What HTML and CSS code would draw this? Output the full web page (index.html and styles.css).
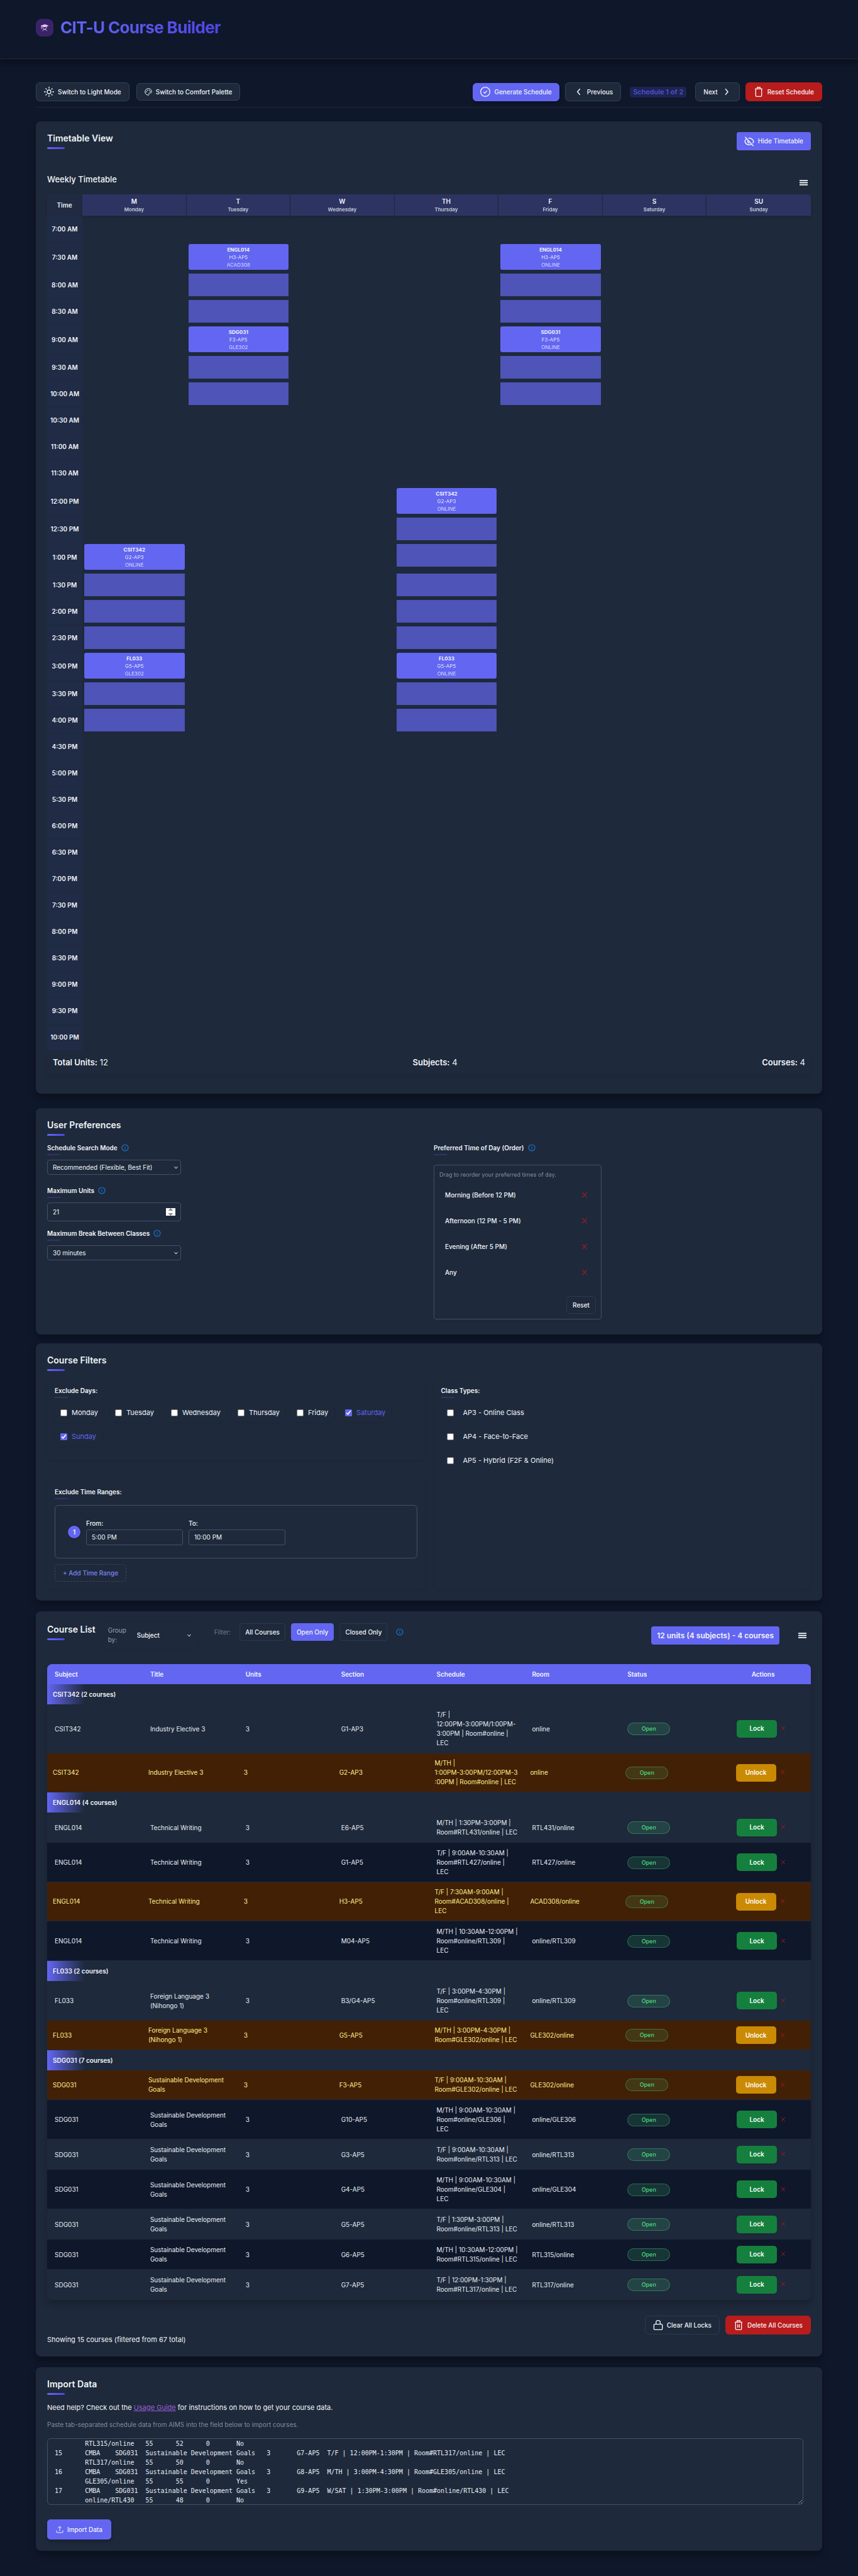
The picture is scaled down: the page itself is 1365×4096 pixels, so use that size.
FILE: index.html
```html
<!DOCTYPE html>
<html lang="en">
<head>
<meta charset="utf-8">
<meta name="viewport" content="width=device-width, initial-scale=1">
<title>CIT-U Course Builder</title>
<link rel="stylesheet" href="styles.css">
</head>
<body>
<svg class="sprite" aria-hidden="true">
  <symbol id="i-info" viewBox="0 0 24 24"><circle cx="12" cy="12" r="10" fill="none" stroke="currentColor" stroke-width="2.400"/><path d="M12 11v6M12 6.500v2.500" stroke="currentColor" stroke-width="2.400" fill="none"/></symbol>
  <symbol id="i-x" viewBox="0 0 12 12"><path d="M1.500 1l9 10M10.500 1l-9 10" stroke="currentColor" stroke-width="1.300" fill="none"/></symbol>
  <symbol id="i-menu" viewBox="0 0 18 12"><path d="M0 0h18v2.500H0zM0 4.750h18v2.500H0zM0 9.500h18v2.500H0z" fill="currentColor"/></symbol>
</svg>

<header class="site-header">
  <span class="logo"><svg viewBox="0 0 24 24" fill="none" stroke="currentColor" stroke-width="1.800" stroke-linecap="round"><path d="M12 2.500L1.500 6 12 9.500 22.500 6z" fill="currentColor" stroke-linejoin="round"/><path d="M2 6v9M6 8v3a6 6 0 0 0 12 0V8M5 22l4-4M19 22l-4-4M9 18q3-2 6 0"/></svg></span>
  <h1>CIT-U Course Builder</h1>
</header>

<main>
  <div class="toolbar">
    <div class="toolbar-left">
      <button class="btn" type="button"><svg viewBox="0 0 24 24" fill="none" stroke="currentColor" stroke-width="2"><circle cx="12" cy="12" r="4.500"/><path d="M12 0v4M12 20v4M0 12h4M20 12h4M3.800 3.800l2.500 2.500M17.700 17.700l2.500 2.500M3.800 20.200l2.500-2.500M17.700 6.300l2.500-2.500"/></svg>Switch to Light Mode</button>
      <button class="btn btn-short" type="button"><svg class="small" viewBox="0 0 24 24" fill="none" stroke="currentColor" stroke-width="2"><path d="M12 1.500C6 1.500 1.500 6.200 1.500 12S6 22.500 12 22.500c2 0 2.500-1.500 1.800-3-.8-2 .2-3.700 2.400-3.700h3.300c2 0 3-1.600 3-3.800 0-6-4.700-10.500-10.500-10.500z"/><g fill="currentColor" stroke="none"><circle cx="6.500" cy="12" r="1.700"/><circle cx="9" cy="7" r="1.700"/><circle cx="15" cy="7" r="1.700"/><circle cx="18" cy="11" r="1.700"/></g></svg>Switch to Comfort Palette</button>
    </div>
    <div class="toolbar-right">
      <button class="btn btn-primary" type="button"><svg viewBox="0 0 24 24" fill="none" stroke="currentColor" stroke-width="2"><circle cx="12" cy="12" r="11"/><path d="M8 12.500l3 3 5-6"/></svg>Generate Schedule</button>
      <button class="btn" type="button"><svg viewBox="0 0 24 24" fill="none" stroke="currentColor" stroke-width="2.200"><path d="M16 5l-6 7 6 7"/></svg>Previous</button>
      <span class="schedule-pill">Schedule 1 of 2</span>
      <button class="btn" type="button">Next<svg viewBox="0 0 24 24" fill="none" stroke="currentColor" stroke-width="2.200"><path d="M9 5l6 7-6 7"/></svg></button>
      <button class="btn btn-danger" type="button"><svg viewBox="0 0 24 24" fill="none" stroke="currentColor" stroke-width="2"><path d="M3 5h18M8.500 4V1.500h7V4M5 6v15q0 2 2 2h10q2 0 2-2V6"/></svg>Reset Schedule</button>
    </div>
  </div>

  <section class="card card-timetable">
    <div class="card-head">
      <h2>Timetable View</h2>
      <button class="btn btn-primary btn-flat" type="button"><svg viewBox="0 0 24 24" fill="none" stroke="currentColor" stroke-width="2.200"><path d="M2 1l20 22M6 5.500C3.500 7 2 9.500 1.500 12c1.500 4.500 5.500 8 10.500 8 2 0 3.800-.5 5.500-1.500M10 4.200c6-1 10.500 2.800 12.500 7.800-.5 1.500-1.300 2.800-2.500 4M9 9.500c-1.500 3 0 6 3.500 6"/></svg>Hide Timetable</button>
    </div>
    <div class="sub-head">
      <h3>Weekly Timetable</h3>
      <button class="icon-btn" type="button" aria-label="Timetable menu"><svg class="menu"><use href="#i-menu"/></svg></button>
    </div>
    <table class="timetable">
      <thead>
        <tr><th class="time-col">Time</th><th>M<small>Monday</small></th><th>T<small>Tuesday</small></th><th>W<small>Wednesday</small></th><th>TH<small>Thursday</small></th><th>F<small>Friday</small></th><th>S<small>Saturday</small></th><th>SU<small>Sunday</small></th></tr>
      </thead>
      <tbody>
        <tr><th>7:00 AM</th><td></td><td></td><td></td><td></td><td></td><td></td><td></td></tr>
        <tr class="tall"><th>7:30 AM</th><td></td><td><div class="slot"><b>ENGL014</b><span>H3-AP5</span><i>ACAD308</i></div></td><td></td><td></td><td><div class="slot"><b>ENGL014</b><span>H3-AP5</span><i>ONLINE</i></div></td><td></td><td></td></tr>
        <tr><th>8:00 AM</th><td></td><td><div class="cont"></div></td><td></td><td></td><td><div class="cont"></div></td><td></td><td></td></tr>
        <tr><th>8:30 AM</th><td></td><td><div class="cont"></div></td><td></td><td></td><td><div class="cont"></div></td><td></td><td></td></tr>
        <tr class="tall"><th>9:00 AM</th><td></td><td><div class="slot"><b>SDG031</b><span>F3-AP5</span><i>GLE302</i></div></td><td></td><td></td><td><div class="slot"><b>SDG031</b><span>F3-AP5</span><i>ONLINE</i></div></td><td></td><td></td></tr>
        <tr><th>9:30 AM</th><td></td><td><div class="cont"></div></td><td></td><td></td><td><div class="cont"></div></td><td></td><td></td></tr>
        <tr><th>10:00 AM</th><td></td><td><div class="cont"></div></td><td></td><td></td><td><div class="cont"></div></td><td></td><td></td></tr>
        <tr><th>10:30 AM</th><td></td><td></td><td></td><td></td><td></td><td></td><td></td></tr>
        <tr><th>11:00 AM</th><td></td><td></td><td></td><td></td><td></td><td></td><td></td></tr>
        <tr><th>11:30 AM</th><td></td><td></td><td></td><td></td><td></td><td></td><td></td></tr>
        <tr class="tall"><th>12:00 PM</th><td></td><td></td><td></td><td><div class="slot"><b>CSIT342</b><span>G2-AP3</span><i>ONLINE</i></div></td><td></td><td></td><td></td></tr>
        <tr><th>12:30 PM</th><td></td><td></td><td></td><td><div class="cont"></div></td><td></td><td></td><td></td></tr>
        <tr class="tall"><th>1:00 PM</th><td><div class="slot"><b>CSIT342</b><span>G2-AP3</span><i>ONLINE</i></div></td><td></td><td></td><td><div class="cont"></div></td><td></td><td></td><td></td></tr>
        <tr><th>1:30 PM</th><td><div class="cont"></div></td><td></td><td></td><td><div class="cont"></div></td><td></td><td></td><td></td></tr>
        <tr><th>2:00 PM</th><td><div class="cont"></div></td><td></td><td></td><td><div class="cont"></div></td><td></td><td></td><td></td></tr>
        <tr><th>2:30 PM</th><td><div class="cont"></div></td><td></td><td></td><td><div class="cont"></div></td><td></td><td></td><td></td></tr>
        <tr class="tall"><th>3:00 PM</th><td><div class="slot"><b>FL033</b><span>G5-AP5</span><i>GLE302</i></div></td><td></td><td></td><td><div class="slot"><b>FL033</b><span>G5-AP5</span><i>ONLINE</i></div></td><td></td><td></td><td></td></tr>
        <tr><th>3:30 PM</th><td><div class="cont"></div></td><td></td><td></td><td><div class="cont"></div></td><td></td><td></td><td></td></tr>
        <tr><th>4:00 PM</th><td><div class="cont"></div></td><td></td><td></td><td><div class="cont"></div></td><td></td><td></td><td></td></tr>
        <tr><th>4:30 PM</th><td></td><td></td><td></td><td></td><td></td><td></td><td></td></tr>
        <tr><th>5:00 PM</th><td></td><td></td><td></td><td></td><td></td><td></td><td></td></tr>
        <tr><th>5:30 PM</th><td></td><td></td><td></td><td></td><td></td><td></td><td></td></tr>
        <tr><th>6:00 PM</th><td></td><td></td><td></td><td></td><td></td><td></td><td></td></tr>
        <tr><th>6:30 PM</th><td></td><td></td><td></td><td></td><td></td><td></td><td></td></tr>
        <tr><th>7:00 PM</th><td></td><td></td><td></td><td></td><td></td><td></td><td></td></tr>
        <tr><th>7:30 PM</th><td></td><td></td><td></td><td></td><td></td><td></td><td></td></tr>
        <tr><th>8:00 PM</th><td></td><td></td><td></td><td></td><td></td><td></td><td></td></tr>
        <tr><th>8:30 PM</th><td></td><td></td><td></td><td></td><td></td><td></td><td></td></tr>
        <tr><th>9:00 PM</th><td></td><td></td><td></td><td></td><td></td><td></td><td></td></tr>
        <tr><th>9:30 PM</th><td></td><td></td><td></td><td></td><td></td><td></td><td></td></tr>
        <tr><th>10:00 PM</th><td></td><td></td><td></td><td></td><td></td><td></td><td></td></tr>
      </tbody>
    </table>
    <div class="summary">
      <span><b>Total Units:</b> 12</span>
      <span><b>Subjects:</b> 4</span>
      <span><b>Courses:</b> 4</span>
    </div>
  </section>

  <section class="card card-prefs">
    <h2>User Preferences</h2>
    <div class="two-col">
      <div>
        <div class="field">
          <div class="label"><label for="mode">Schedule Search Mode</label><svg class="info"><use href="#i-info"/></svg></div>
          <select id="mode" class="control"><option>Recommended (Flexible, Best Fit)</option></select>
        </div>
        <div class="field">
          <div class="label"><label for="units">Maximum Units</label><svg class="info"><use href="#i-info"/></svg></div>
          <input id="units" class="control control-number" type="number" value="21">
        </div>
        <div class="field">
          <div class="label"><label for="gap">Maximum Break Between Classes</label><svg class="info"><use href="#i-info"/></svg></div>
          <select id="gap" class="control"><option>30 minutes</option></select>
        </div>
      </div>
      <div>
        <div class="label"><span>Preferred Time of Day (Order)</span><svg class="info"><use href="#i-info"/></svg></div>
        <div class="order-box">
          <p>Drag to reorder your preferred times of day.</p>
          <ul>
            <li>Morning (Before 12 PM)<svg><use href="#i-x"/></svg></li>
            <li>Afternoon (12 PM - 5 PM)<svg><use href="#i-x"/></svg></li>
            <li>Evening (After 5 PM)<svg><use href="#i-x"/></svg></li>
            <li>Any<svg><use href="#i-x"/></svg></li>
          </ul>
          <button class="btn btn-outline btn-reset" type="button">Reset</button>
        </div>
      </div>
    </div>
  </section>

  <section class="card card-filters">
    <h2>Course Filters</h2>
    <div class="filter-grid">
      <div class="panel panel-days">
        <div class="label"><span>Exclude Days:</span></div>
        <div class="chips">
          <label><input type="checkbox">Monday</label>
          <label><input type="checkbox">Tuesday</label>
          <label><input type="checkbox">Wednesday</label>
          <label><input type="checkbox">Thursday</label>
          <label><input type="checkbox">Friday</label>
          <label class="on"><input type="checkbox" checked>Saturday</label>
          <label class="on"><input type="checkbox" checked>Sunday</label>
        </div>
      </div>
      <div class="panel panel-types">
        <div class="label"><span>Class Types:</span></div>
        <div class="types">
          <label><input type="checkbox">AP3 - Online Class</label>
          <label><input type="checkbox">AP4 - Face-to-Face</label>
          <label><input type="checkbox">AP5 - Hybrid (F2F &amp; Online)</label>
        </div>
      </div>
      <div class="panel">
        <div class="label"><span>Exclude Time Ranges:</span></div>
        <div class="range-box">
          <span class="range-no">1</span>
          <div class="range-field"><label for="from">From:</label><input id="from" type="text" value="5:00 PM"></div>
          <div class="range-field"><label for="to">To:</label><input id="to" type="text" value="10:00 PM"></div>
        </div>
        <button class="btn add-range" type="button">+ Add Time Range</button>
      </div>
    </div>
  </section>

  <section class="card">
    <div class="list-head">
      <div class="list-tools">
        <h2>Course List</h2>
        <div class="group-by"><label for="group">Group by:</label><select id="group"><option>Subject</option></select></div>
        <div class="filters">
          <span>Filter:</span>
          <div class="filter-btns">
            <button class="btn btn-outline" type="button">All Courses</button>
            <button class="btn btn-primary btn-flat" type="button">Open Only</button>
            <button class="btn btn-outline" type="button">Closed Only</button>
          </div>
          <svg class="info"><use href="#i-info"/></svg>
        </div>
      </div>
      <div class="list-side">
        <span class="badge">12 units (4 subjects) - 4 courses</span>
        <button class="icon-btn" type="button" aria-label="Course list menu"><svg class="menu"><use href="#i-menu"/></svg></button>
      </div>
    </div>

    <table class="courses">
      <thead>
        <tr><th>Subject</th><th>Title</th><th>Units</th><th>Section</th><th>Schedule</th><th>Room</th><th>Status</th><th class="act">Actions</th></tr>
      </thead>
      <tbody>
        <tr class="group"><th colspan="8">CSIT342 (2 courses)</th></tr>
        <tr><td>CSIT342</td><td>Industry Elective 3</td><td>3</td><td>G1-AP3</td><td>T/F |<br>12:00PM-3:00PM/1:00PM-<br>3:00PM | Room#online |<br>LEC</td><td>online</td><td><span class="open">Open</span></td><td class="act"><button class="lock" type="button">Lock</button><button class="del" type="button" aria-label="Delete"><svg><use href="#i-x"/></svg></button></td></tr>
        <tr class="locked"><td>CSIT342</td><td>Industry Elective 3</td><td>3</td><td>G2-AP3</td><td>M/TH |<br>1:00PM-3:00PM/12:00PM-3<br>:00PM | Room#online | LEC</td><td>online</td><td><span class="open">Open</span></td><td class="act"><button class="lock" type="button">Unlock</button><button class="del" type="button" aria-label="Delete"><svg><use href="#i-x"/></svg></button></td></tr>
        <tr class="group"><th colspan="8">ENGL014 (4 courses)</th></tr>
        <tr><td>ENGL014</td><td>Technical Writing</td><td>3</td><td>E6-AP5</td><td>M/TH | 1:30PM-3:00PM |<br>Room#RTL431/online | LEC</td><td>RTL431/online</td><td><span class="open">Open</span></td><td class="act"><button class="lock" type="button">Lock</button><button class="del" type="button" aria-label="Delete"><svg><use href="#i-x"/></svg></button></td></tr>
        <tr class="dark"><td>ENGL014</td><td>Technical Writing</td><td>3</td><td>G1-AP5</td><td>T/F | 9:00AM-10:30AM |<br>Room#RTL427/online |<br>LEC</td><td>RTL427/online</td><td><span class="open">Open</span></td><td class="act"><button class="lock" type="button">Lock</button><button class="del" type="button" aria-label="Delete"><svg><use href="#i-x"/></svg></button></td></tr>
        <tr class="locked"><td>ENGL014</td><td>Technical Writing</td><td>3</td><td>H3-AP5</td><td>T/F | 7:30AM-9:00AM |<br>Room#ACAD308/online |<br>LEC</td><td>ACAD308/online</td><td><span class="open">Open</span></td><td class="act"><button class="lock" type="button">Unlock</button><button class="del" type="button" aria-label="Delete"><svg><use href="#i-x"/></svg></button></td></tr>
        <tr class="dark"><td>ENGL014</td><td>Technical Writing</td><td>3</td><td>M04-AP5</td><td>M/TH | 10:30AM-12:00PM |<br>Room#online/RTL309 |<br>LEC</td><td>online/RTL309</td><td><span class="open">Open</span></td><td class="act"><button class="lock" type="button">Lock</button><button class="del" type="button" aria-label="Delete"><svg><use href="#i-x"/></svg></button></td></tr>
        <tr class="group"><th colspan="8">FL033 (2 courses)</th></tr>
        <tr><td>FL033</td><td>Foreign Language 3<br>(Nihongo 1)</td><td>3</td><td>B3/G4-AP5</td><td>T/F | 3:00PM-4:30PM |<br>Room#online/RTL309 |<br>LEC</td><td>online/RTL309</td><td><span class="open">Open</span></td><td class="act"><button class="lock" type="button">Lock</button><button class="del" type="button" aria-label="Delete"><svg><use href="#i-x"/></svg></button></td></tr>
        <tr class="locked"><td>FL033</td><td>Foreign Language 3<br>(Nihongo 1)</td><td>3</td><td>G5-AP5</td><td>M/TH | 3:00PM-4:30PM |<br>Room#GLE302/online | LEC</td><td>GLE302/online</td><td><span class="open">Open</span></td><td class="act"><button class="lock" type="button">Unlock</button><button class="del" type="button" aria-label="Delete"><svg><use href="#i-x"/></svg></button></td></tr>
        <tr class="group"><th colspan="8">SDG031 (7 courses)</th></tr>
        <tr class="locked"><td>SDG031</td><td>Sustainable Development<br>Goals</td><td>3</td><td>F3-AP5</td><td>T/F | 9:00AM-10:30AM |<br>Room#GLE302/online | LEC</td><td>GLE302/online</td><td><span class="open">Open</span></td><td class="act"><button class="lock" type="button">Unlock</button><button class="del" type="button" aria-label="Delete"><svg><use href="#i-x"/></svg></button></td></tr>
        <tr class="dark"><td>SDG031</td><td>Sustainable Development<br>Goals</td><td>3</td><td>G10-AP5</td><td>M/TH | 9:00AM-10:30AM |<br>Room#online/GLE306 |<br>LEC</td><td>online/GLE306</td><td><span class="open">Open</span></td><td class="act"><button class="lock" type="button">Lock</button><button class="del" type="button" aria-label="Delete"><svg><use href="#i-x"/></svg></button></td></tr>
        <tr><td>SDG031</td><td>Sustainable Development<br>Goals</td><td>3</td><td>G3-AP5</td><td>T/F | 9:00AM-10:30AM |<br>Room#online/RTL313 | LEC</td><td>online/RTL313</td><td><span class="open">Open</span></td><td class="act"><button class="lock" type="button">Lock</button><button class="del" type="button" aria-label="Delete"><svg><use href="#i-x"/></svg></button></td></tr>
        <tr class="dark"><td>SDG031</td><td>Sustainable Development<br>Goals</td><td>3</td><td>G4-AP5</td><td>M/TH | 9:00AM-10:30AM |<br>Room#online/GLE304 |<br>LEC</td><td>online/GLE304</td><td><span class="open">Open</span></td><td class="act"><button class="lock" type="button">Lock</button><button class="del" type="button" aria-label="Delete"><svg><use href="#i-x"/></svg></button></td></tr>
        <tr><td>SDG031</td><td>Sustainable Development<br>Goals</td><td>3</td><td>G5-AP5</td><td>T/F | 1:30PM-3:00PM |<br>Room#online/RTL313 | LEC</td><td>online/RTL313</td><td><span class="open">Open</span></td><td class="act"><button class="lock" type="button">Lock</button><button class="del" type="button" aria-label="Delete"><svg><use href="#i-x"/></svg></button></td></tr>
        <tr class="dark"><td>SDG031</td><td>Sustainable Development<br>Goals</td><td>3</td><td>G6-AP5</td><td>M/TH | 10:30AM-12:00PM |<br>Room#RTL315/online | LEC</td><td>RTL315/online</td><td><span class="open">Open</span></td><td class="act"><button class="lock" type="button">Lock</button><button class="del" type="button" aria-label="Delete"><svg><use href="#i-x"/></svg></button></td></tr>
        <tr><td>SDG031</td><td>Sustainable Development<br>Goals</td><td>3</td><td>G7-AP5</td><td>T/F | 12:00PM-1:30PM |<br>Room#RTL317/online | LEC</td><td>RTL317/online</td><td><span class="open">Open</span></td><td class="act"><button class="lock" type="button">Lock</button><button class="del" type="button" aria-label="Delete"><svg><use href="#i-x"/></svg></button></td></tr>
      </tbody>
    </table>

    <div class="list-actions">
      <button class="btn btn-outline" type="button"><svg viewBox="0 0 24 24" fill="none" stroke="currentColor" stroke-width="2"><rect x="2" y="10" width="20" height="13" rx="2"/><path d="M7 10V6a5 5 0 0 1 10 0v4"/></svg>Clear All Locks</button>
      <button class="btn btn-danger" type="button"><svg viewBox="0 0 24 24" fill="none" stroke="currentColor" stroke-width="2"><path d="M3 5h18M8.500 4V1.500h7V4M5 6v15q0 2 2 2h10q2 0 2-2V6M10 10v8M14 10v8"/></svg>Delete All Courses</button>
    </div>
    <p class="showing">Showing 15 courses (filtered from 67 total)</p>
  </section>

  <section class="card">
    <h2>Import Data</h2>
    <p class="help">Need help? Check out the <a href="#guide">Usage Guide</a> for instructions on how to get your course data.</p>
    <label class="hint" for="import">Paste tab-separated schedule data from AIMS into the field below to import courses.</label>
    <textarea id="import" spellcheck="false" wrap="off">&#9;RTL315/online&#9;55&#9;52&#9;0&#9;No
15&#9;CMBA&#9;SDG031&#9;Sustainable Development Goals&#9;3&#9;G7-AP5&#9;T/F | 12:00PM-1:30PM | Room#RTL317/online | LEC
&#9;RTL317/online&#9;55&#9;50&#9;0&#9;No
16&#9;CMBA&#9;SDG031&#9;Sustainable Development Goals&#9;3&#9;G8-AP5&#9;M/TH | 3:00PM-4:30PM | Room#GLE305/online | LEC
&#9;GLE305/online&#9;55&#9;55&#9;0&#9;Yes
17&#9;CMBA&#9;SDG031&#9;Sustainable Development Goals&#9;3&#9;G9-AP5&#9;W/SAT | 1:30PM-3:00PM | Room#online/RTL430 | LEC
&#9;online/RTL430&#9;55&#9;48&#9;0&#9;No</textarea>
    <button class="btn btn-primary btn-import" type="button"><svg class="small" viewBox="0 0 24 24" fill="none" stroke="currentColor" stroke-width="2"><path d="M12 17V2M6.500 7.500L12 2l5.500 5.500M2 15v5q0 2 2 2h16q2 0 2-2v-5"/></svg>Import Data</button>
  </section>
</main>
</body>
</html>
```

FILE: styles.css
```css
:root {
  --bg: #0f172a;
  --card: #1e293b;
  --line: #334155;
  --edge: #435065;
  --text: #f1f5f9;
  --muted: #94a3b8;
  --primary: #6366f1;
  --day: #2d3461;
}

* { box-sizing: border-box; }

body {
  margin: 0;
  padding-bottom: 40px;
  background: var(--bg);
  color: var(--text);
  font-family: Inter, "Liberation Sans", sans-serif;
  font-size: 10px;
  line-height: 15px;
}

h1, h2, h3, p, ul { margin: 0; padding: 0; }
button, input, select { font: inherit; color: inherit; }
button { cursor: pointer; }
.sprite { display: none; }

/* Header */
.site-header {
  display: flex;
  align-items: center;
  gap: 11px;
  padding: 28px 57px 33px;
  border-bottom: 1px solid var(--card);
  box-shadow: 0 7px 11px rgba(0, 0, 0, .35);
}
.logo {
  display: flex;
  align-items: center;
  justify-content: center;
  width: 28px;
  height: 28px;
  border-radius: 9px;
  background: #3b2368;
  color: #e9d5ff;
}
.logo svg { width: 12px; height: 12px; }
h1 {
  font-size: 26px;
  line-height: 32px;
  font-weight: 700;
  letter-spacing: -0.025em;
  background: linear-gradient(90deg, #6366f1, #4f46e5);
  background-clip: text;
  color: transparent;
}

main { padding: 37px 57px 0; }

/* Buttons */
.btn {
  display: inline-flex;
  align-items: center;
  justify-content: center;
  gap: 6px;
  height: 30px;
  padding: 0 12px;
  border: 1px solid var(--line);
  border-radius: 6px;
  background: var(--card);
  font-weight: 500;
  white-space: nowrap;
}
.btn svg { width: 16px; height: 16px; }
.btn svg.small { width: 12px; height: 12px; }
.btn-short { height: 28px; }
.btn-outline { border-color: #2c3a4e; background: transparent; }
.btn-primary {
  height: 29px;
  padding: 0 11px;
  border-color: var(--primary);
  background: var(--primary);
  box-shadow: 0 3px 5px rgba(0, 0, 0, .25);
}
.btn-danger { border-color: #b91c1c; background: #b91c1c; }
.btn-flat { border-radius: 3px; box-shadow: none; }
.icon-btn {
  display: flex;
  padding: 0;
  border: 0;
  background: none;
}
.menu { width: 13px; height: 9px; }
.info { width: 12px; height: 12px; color: #1976d2; }

/* Toolbar */
.toolbar {
  display: flex;
  justify-content: space-between;
  padding-bottom: 9px;
  margin-bottom: 22px;
  border-bottom: 1px solid var(--card);
}
.toolbar-left, .toolbar-right { display: flex; align-items: center; }
.toolbar-left { gap: 11px; }
.toolbar-right { gap: 9px; }
.schedule-pill {
  margin: 0 5px;
  padding: 0 5px;
  border-radius: 4px;
  background: #1e2350;
  color: #5558e0;
  font-size: 11px;
  line-height: 17px;
  font-weight: 500;
}

/* Cards */
.card {
  margin-bottom: 17px;
  padding: 17px 18px 18px;
  border-radius: 8px;
  background: var(--card);
  box-shadow: 0 7px 11px rgba(0, 0, 0, .3);
}
.card:last-child { margin-bottom: 0; }
.card-timetable { margin-bottom: 23px; padding-bottom: 30px; }
.card-prefs { margin-bottom: 14px; padding-bottom: 24px; }
h2 {
  height: 26px;
  font-size: 14px;
  line-height: 20px;
  font-weight: 600;
}
h2::after {
  content: "";
  display: block;
  width: 28px;
  height: 3px;
  margin-top: 4px;
  border-radius: 2px;
  background: linear-gradient(90deg, #6366f1, #4f46e5);
}
.card-head { display: flex; justify-content: space-between; align-items: flex-start; }
.sub-head {
  display: flex;
  justify-content: space-between;
  align-items: flex-end;
  height: 20px;
  margin: 36px 5px 14px 0;
}
h3 { font-size: 13px; line-height: 20px; font-weight: 500; }

/* Timetable */
table { width: 100%; border-collapse: separate; border-spacing: 0; table-layout: fixed; }
.timetable thead th {
  height: 34px;
  padding: 0;
  border-right: 1px solid var(--card);
  background: var(--day);
  font-size: 10px;
  line-height: 13px;
  font-weight: 600;
  box-shadow: 0 3px 4px rgba(0, 0, 0, .08);
}
.timetable thead .time-col { width: 56px; background: #202b42; }
.timetable thead th:last-child { border-right: 0; border-radius: 0 5px 0 0; }
.timetable small {
  display: block;
  font-size: 8px;
  line-height: 12px;
  opacity: .8;
}
.timetable tbody th {
  padding: 0;
  border-top: 1px solid #1f293f;
  background: #202b45;
  font-size: 10px;
  font-weight: 600;
}
.timetable tbody td { padding: 3px; vertical-align: top; }
.timetable tbody tr { height: 42px; }
.timetable tbody tr.tall { height: 47px; }
.slot {
  display: flex;
  flex-direction: column;
  align-items: center;
  justify-content: center;
  height: 41px;
  border-radius: 3px;
  background: var(--primary);
  font-size: 8px;
  line-height: 12px;
}
.slot b { font-weight: 700; }
.slot span { opacity: .9; }
.slot i { font-style: normal; opacity: .8; }
.cont { height: 36px; background: #4e54b8; }
.summary {
  display: flex;
  justify-content: space-between;
  align-items: center;
  height: 39px;
  padding: 0 9px;
  border-radius: 6px;
  font-size: 13px;
  box-shadow: 0 3px 5px rgba(0, 0, 0, .07);
}
.summary b { font-weight: 600; }

/* Preferences */
.two-col {
  display: grid;
  grid-template-columns: 1fr 1fr;
  gap: 15px;
  margin-top: 12px;
}
.field { min-height: 68px; }
.label {
  position: relative;
  display: flex;
  align-items: center;
  gap: 6px;
  height: 16px;
  font-weight: 600;
}
.label::after {
  content: "";
  position: absolute;
  left: 0;
  top: 18px;
  width: 21px;
  height: 2px;
  background: #2f3568;
}
select {
  appearance: none;
  background: var(--card) url("data:image/svg+xml,%3Csvg xmlns='http://www.w3.org/2000/svg' width='6' height='5' viewBox='0 0 6 5'%3E%3Cpath d='M.5 .8L3 4 5.500 .8' fill='none' stroke='%23f1f5f9'/%3E%3C/svg%3E") no-repeat right 4px center;
}
.control {
  display: block;
  width: 213px;
  height: 24px;
  margin-top: 11px;
  padding: 0 8px;
  border: 1px solid var(--edge);
  border-radius: 4px;
  background-color: var(--card);
}
.control-number { height: 30px; }
.control-number::-webkit-inner-spin-button { opacity: 1; height: 13px; }
.order-box {
  width: 267px;
  margin-top: 19px;
  padding: 8px;
  border: 1px solid var(--edge);
  border-radius: 4px;
}
.order-box p { color: var(--muted); font-size: 9px; line-height: 14px; opacity: .85; }
.order-box ul {
  display: grid;
  gap: 9px;
  margin: 9px 0 22px;
  list-style: none;
}
.order-box li {
  display: flex;
  justify-content: space-between;
  align-items: center;
  height: 32px;
  padding: 0 13px 0 9px;
  font-weight: 500;
}
.order-box li svg { width: 10px; height: 10px; color: #a81c1c; }
.btn-reset { display: flex; height: 28px; margin-left: auto; padding: 0 9px; }

/* Filters */
.filter-grid {
  display: grid;
  grid-template-columns: 1fr 1fr;
  gap: 29px 14px;
  margin-top: 11px;
}
.panel {
  padding: 13px 12px 12px;
  border-radius: 8px;
  box-shadow: 0 1px 3px rgba(0, 0, 0, .1);
}
.panel-days { padding-bottom: 23px; }
.panel-types { grid-row: span 2; grid-column: 2; }
.chips { display: flex; flex-wrap: wrap; gap: 9px; margin-top: 13px; }
.types { display: grid; gap: 9px; margin-top: 13px; }
.chips label, .types label {
  display: flex;
  align-items: center;
  gap: 7px;
  height: 29px;
  padding: 0 9px;
  border-radius: 6px;
  font-size: 11px;
}
.chips label { box-shadow: 0 0 3px rgba(0, 0, 0, .1); }
.types label { gap: 15px; }
.chips .on { color: var(--primary); }
input[type="checkbox"] {
  width: 11px;
  height: 11px;
  margin: 0;
  accent-color: var(--primary);
}
.range-box {
  display: flex;
  align-items: center;
  gap: 9px;
  height: 85px;
  margin-top: 13px;
  padding: 0 20px;
  border: 1px solid var(--edge);
  border-radius: 6px;
}
.range-no {
  width: 20px;
  border-radius: 50%;
  background: var(--primary);
  font-size: 10px;
  line-height: 20px;
  font-weight: 600;
  text-align: center;
  box-shadow: 0 1px 3px rgba(0, 0, 0, .3);
}
.range-field { width: 154px; font-weight: 500; }
.range-field label { display: block; height: 17px; line-height: 14px; }
.range-field input {
  display: block;
  width: 100%;
  height: 25px;
  padding: 0 8px;
  border: 1px solid var(--edge);
  border-radius: 3px;
  background: transparent;
  font-weight: 400;
}
.add-range {
  height: 28px;
  margin-top: 9px;
  border: 1px dashed #3a475c;
  background: transparent;
  color: #7c84f4;
}

/* Course list */
.list-head, .list-tools, .filters, .filter-btns, .list-side { display: flex; }
.list-head { justify-content: space-between; align-items: center; margin-bottom: 25px; }
.list-tools h2 { margin: 2px 11px 0 0; white-space: nowrap; }
.group-by {
  display: flex;
  align-items: center;
  gap: 7px;
  width: 154px;
  height: 42px;
  padding: 0 9px;
  border-radius: 6px;
  box-shadow: 0 0 3px rgba(0, 0, 0, .1);
}
.group-by label { width: 30px; color: var(--muted); }
.group-by select {
  width: 99px;
  height: 24px;
  padding: 0 9px;
  border: 0;
  font-weight: 500;
}
.filters { align-items: center; gap: 14px; height: 32px; margin-left: 24px; }
.filters > span { color: #727b89; }
.filter-btns { gap: 9px; }
.filter-btns .btn { height: 28px; padding: 0 8px; border-radius: 4px; }
.list-side { align-items: center; gap: 30px; padding-right: 7px; }
.badge {
  padding: 0 9px;
  border-radius: 4px;
  background: var(--primary);
  font-size: 12px;
  line-height: 29px;
  font-weight: 600;
}
.courses {
  overflow: hidden;
  border-radius: 8px;
  box-shadow: 0 7px 11px rgba(0, 0, 0, .2);
}
.courses th { text-align: left; font-weight: 600; }
.courses thead th { height: 32px; padding: 0 12px; background: var(--primary); }
.courses thead .act, .courses .act { text-align: center; }
.courses .group th {
  height: 32px;
  padding: 0 9px;
  background: linear-gradient(90deg, var(--primary), var(--card) 60px);
}
.courses td {
  padding: 9px 12px 8px;
  border-bottom: 1px solid var(--card);
  color: #e9eef5;
  white-space: nowrap;
}
.courses .dark td { background: var(--bg); }
.courses .locked td {
  padding: 8px 12px 8px 9px;
  background: #422006;
  color: #fef08a;
}
.open {
  display: block;
  width: 68px;
  border: 1px solid rgba(74, 222, 128, .35);
  border-radius: 10px;
  background: rgba(74, 222, 128, .15);
  color: #4ade80;
  font-size: 9px;
  line-height: 18px;
  font-weight: 500;
  text-align: center;
}
.locked .open { background: rgba(74, 222, 128, .12); }
.courses td.act { padding-top: 0; padding-bottom: 0; }
.lock {
  width: 64px;
  height: 28px;
  padding: 0;
  border: 0;
  border-radius: 5px;
  background: #15803d;
  color: #fff;
  font-weight: 600;
}
.locked .lock { background: #ca8a04; }
.del {
  width: 20px;
  padding: 0;
  border: 0;
  background: none;
  color: #a81c1c;
}
.del svg { width: 8px; height: 8px; }
.list-actions { display: flex; justify-content: flex-end; gap: 9px; margin-top: 25px; }
.showing { font-size: 11px; line-height: 17px; }

/* Import */
.help { margin-top: 12px; font-size: 11px; line-height: 18px; }
.help a { color: #9d5fd8; }
.hint { display: block; margin-top: 10px; color: var(--muted); line-height: 16px; opacity: .85; }
textarea {
  display: block;
  width: calc(100% - 12px);
  height: 106px;
  margin-top: 14px;
  padding: 0 11px;
  overflow: hidden;
  border: 1px solid var(--edge);
  border-radius: 6px;
  background: transparent;
  color: #e9eef5;
  font: 10px/15px "DejaVu Sans Mono", monospace;
  tab-size: 8;
  resize: vertical;
}
.btn-import { height: 32px; margin-top: 23px; padding: 0 13px; border-radius: 5px; }
```
